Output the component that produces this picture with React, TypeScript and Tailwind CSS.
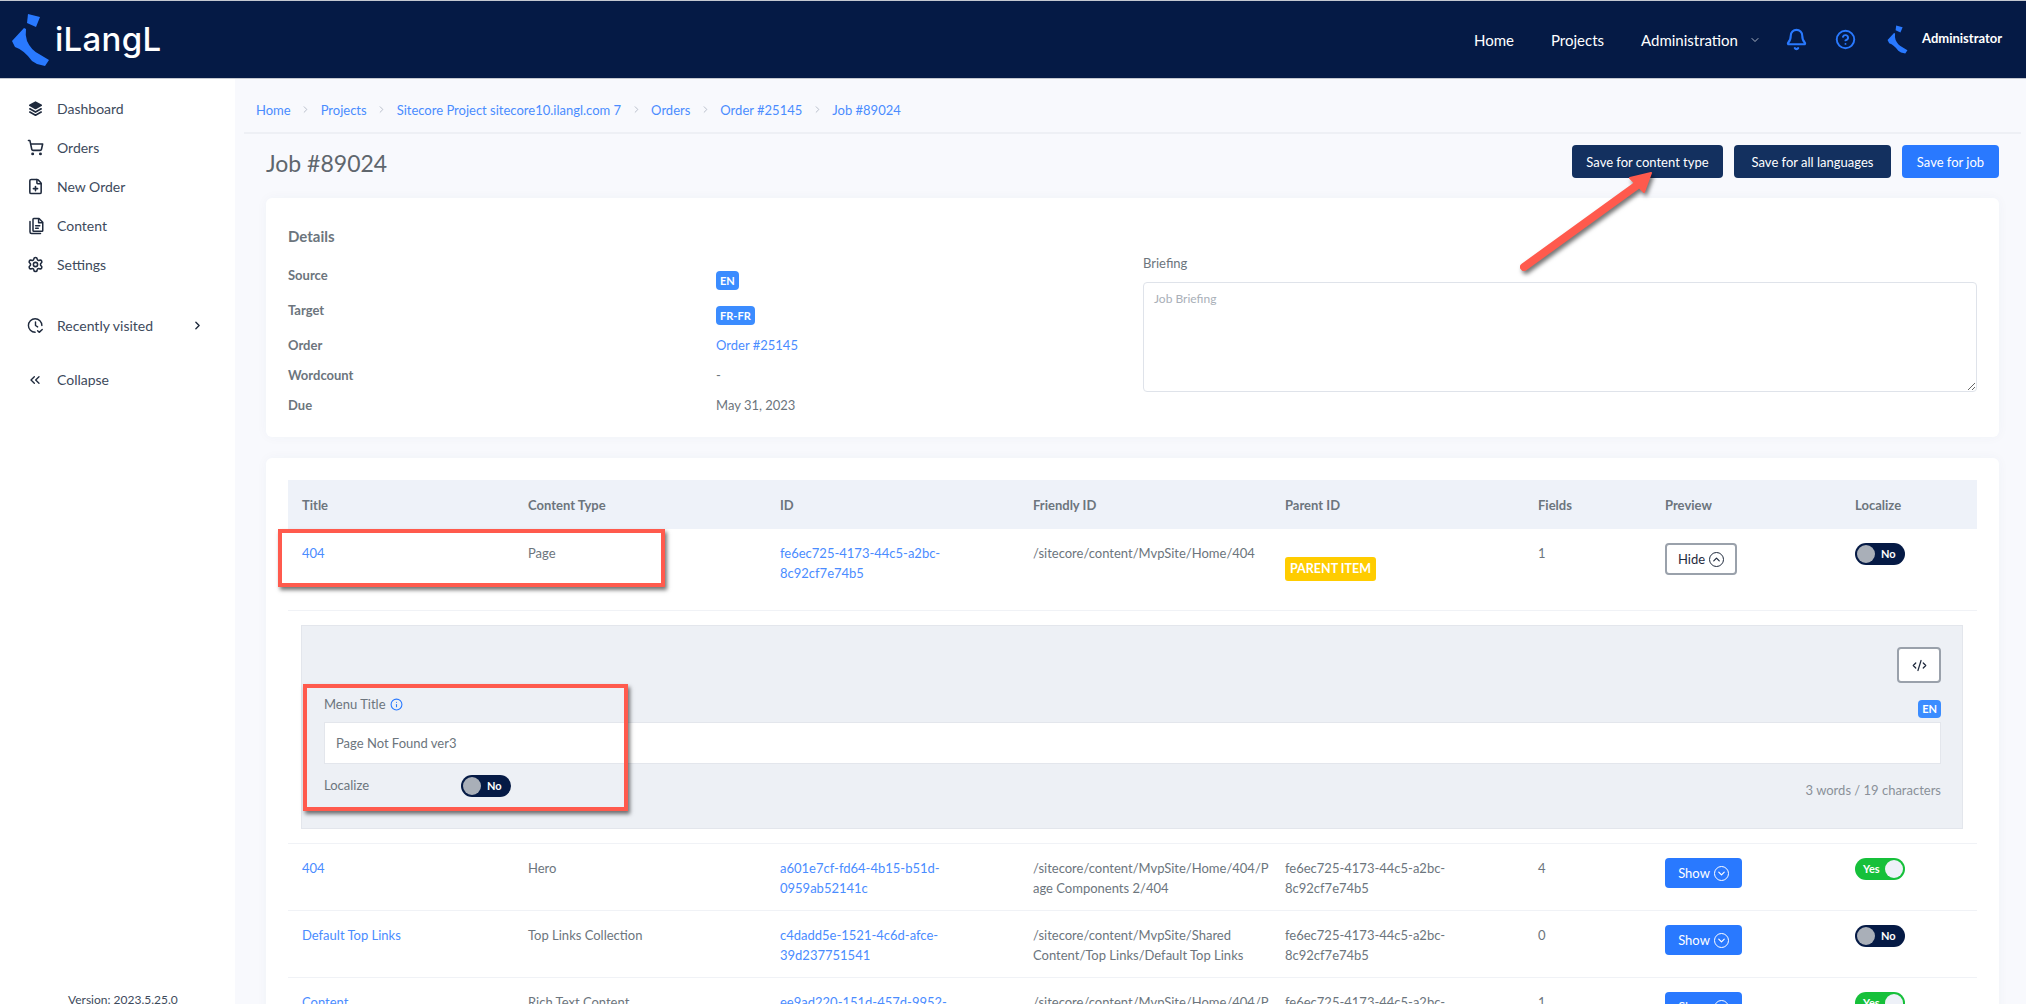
import React from 'react';
import {
  Bell,
  ChevronDown,
  ChevronRight,
  ChevronsLeft,
  ChevronUp,
  CircleHelp,
  CodeXml,
  FilePlus,
  Info,
  Settings,
  ShoppingCart,
} from 'lucide-react';

const Mark: React.FC<{ className: string }> = ({ className }) => (
  <svg viewBox="11 13 39 54" className={className} fill="#2979ff">
    <path d="M28 14 L40 17 L36 27 L27 23 Z" />
    <path d="M24 28 L12 41 L15 47 Q24 50 32 61 L37 64 L45 66 L49 60 L39 54 Q31 50 27 41 Q25 35 26 29 Z" />
  </svg>
);

const LayersIcon: React.FC = () => (
  <svg viewBox="0 0 24 24" className="h-[17px] w-[17px] text-[#1f2a3d]" fill="currentColor" stroke="currentColor" strokeWidth="2.4" strokeLinecap="round" strokeLinejoin="round">
    <path d="M12 3 L20 7.5 L12 12 L4 7.5 Z" />
    <path d="M4 12.5 L12 17 L20 12.5" fill="none" />
    <path d="M4 17 L12 21.5 L20 17" fill="none" />
  </svg>
);

const ContentIcon: React.FC = () => (
  <svg viewBox="0 0 24 24" className="h-[18px] w-[18px] text-[#1f2a3d]" fill="none" stroke="currentColor" strokeWidth="2" strokeLinecap="round" strokeLinejoin="round">
    <path d="M9 2 H16 L21 7 V18 A1 1 0 0 1 20 19 H9 A1 1 0 0 1 8 18 V3 A1 1 0 0 1 9 2 Z" />
    <path d="M15.5 2.5 V7.5 H20.5" />
    <path d="M11.5 11.5 H17 M11.5 15 H15" />
    <path d="M4 6 V20 A2 2 0 0 0 6 22 H18" />
  </svg>
);

const RecentIcon: React.FC = () => (
  <svg viewBox="0 0 24 24" className="h-[17px] w-[17px] text-[#1f2a3d]" fill="none" stroke="currentColor" strokeWidth="2" strokeLinecap="round" strokeLinejoin="round">
    <path d="M21 12 A9.5 9.5 0 1 0 11.5 21.5" />
    <path d="M12 7 V12 L15 14" />
    <path d="M15 19.5 L17.2 21.7 L21.5 17.5" />
  </svg>
);

const Toggle: React.FC<{ on: boolean }> = ({ on }) =>
  on ? (
    <div className="flex h-[22px] w-[50px] items-center justify-between rounded-full bg-[#16c03a] pl-[8px] pr-[2px]">
      <span className="text-[11px] font-bold text-white">Yes</span>
      <span className="h-[18px] w-[18px] rounded-full bg-[#eef1f8]" />
    </div>
  ) : (
    <div className="flex h-[22px] w-[50px] items-center gap-[6px] rounded-full bg-[#051a45] pl-[2px]">
      <span className="h-[18px] w-[18px] rounded-full bg-[#a9afb8]" />
      <span className="text-[11px] font-bold text-white">No</span>
    </div>
  );

const navItems = [
  { label: 'Dashboard', icon: <LayersIcon /> },
  { label: 'Orders', icon: <ShoppingCart className="h-[17px] w-[17px] text-[#1f2a3d]" strokeWidth={2.2} /> },
  { label: 'New Order', icon: <FilePlus className="h-[17px] w-[17px] text-[#1f2a3d]" strokeWidth={2.2} /> },
  { label: 'Content', icon: <ContentIcon /> },
  { label: 'Settings', icon: <Settings className="h-[17px] w-[17px] text-[#1f2a3d]" strokeWidth={2.2} /> },
];

const crumbs = ['Home', 'Projects', 'Sitecore Project sitecore10.ilangl.com 7', 'Orders', 'Order #25145', 'Job #89024'];

const parentId = 'fe6ec725-4173-44c5-a2bc-8c92cf7e74b5';

const rows = [
  { title: '404', type: 'Hero', id: 'a601e7cf-fd64-4b15-b51d-0959ab52141c', friendly: ['/sitecore/content/MvpSite/Home/404/P', 'age Components 2/404'], fields: 4, on: true },
  { title: 'Default Top Links', type: 'Top Links Collection', id: 'c4dadd5e-1521-4c6d-afce-39d237751541', friendly: ['/sitecore/content/MvpSite/Shared', 'Content/Top Links/Default Top Links'], fields: 0, on: false },
  { title: 'Content', type: 'Rich Text Content', id: 'ee9ad220-151d-457d-9952-', friendly: ['/sitecore/content/MvpSite/Home/404/P'], fields: 1, on: true },
];

const gridCols = 'grid grid-cols-[226px_252px_253px_252px_253px_127px_190px_1fr] pl-[14px]';

const App: React.FC = () => {
  return (
    <div className="relative flex h-screen flex-col overflow-hidden bg-[#f8f9fd] font-['Lato',sans-serif] text-[13px] leading-5 text-[#6c757d]">
      {/* top bar */}
      <header className="flex h-[79px] shrink-0 items-center border-y border-[#c4c8d0] bg-[#051a45] text-white">
        <Mark className="ml-[11px] h-[54px] w-[39px]" />
        <span className="ml-[5px] font-['Inter',sans-serif] text-[33px] font-medium leading-none tracking-[0.3px]">iLangL</span>
        <nav className="ml-auto flex items-center text-[15px]">
          <span>Home</span>
          <span className="ml-[37px]">Projects</span>
          <span className="ml-[37px]">Administration</span>
          <ChevronDown className="ml-[11px] h-[12px] w-[12px] text-[#aab2c2]" />
          <Bell className="ml-[24px] h-[23px] w-[23px] text-[#2979ff]" strokeWidth={2.2} />
          <CircleHelp className="ml-[27px] h-[21px] w-[21px] text-[#2979ff]" strokeWidth={2.2} />
          <Mark className="ml-[31px] h-[29px] w-[21px]" />
          <span className="mb-[4px] ml-[14px] mr-[24px] text-[13px] font-bold">Administrator</span>
        </nav>
      </header>

      <div className="flex min-h-0 flex-1">
        {/* sidebar */}
        <aside className="flex w-[235px] shrink-0 flex-col bg-white pl-[27px] pt-[10px] text-[14px] text-[#3d4a5c]">
          {navItems.map(({ label, icon }) => (
            <div key={label} className="flex h-[39px] items-center">
              <span className="flex w-[30px] shrink-0">{icon}</span>
              <span>{label}</span>
            </div>
          ))}
          <div className="mt-[22px] flex h-[39px] items-center">
            <span className="flex w-[30px] shrink-0"><RecentIcon /></span>
            <span>Recently visited</span>
            <ChevronRight className="ml-[38px] h-[13px] w-[13px] text-[#1f2a3d]" strokeWidth={2.6} />
          </div>
          <div className="mt-[15px] flex h-[39px] items-center">
            <span className="flex w-[30px] shrink-0"><ChevronsLeft className="h-[16px] w-[16px] text-[#1f2a3d]" /></span>
            <span>Collapse</span>
          </div>
          <div className="mb-[-6px] ml-[41px] mt-auto text-[12px]">Version: 2023.5.25.0</div>
        </aside>

        {/* main */}
        <main className="min-w-0 flex-1 pl-[9px] pr-[5px]">
          <div className="flex h-[55px] items-center gap-[9.5px] border-b-2 border-[#eef0f5] pl-[12px] pt-[8px] text-[#4a8cff]">
            {crumbs.map((c, i) => (
              <React.Fragment key={c}>
                {i > 0 && <ChevronRight className="h-[11px] w-[11px] text-[#b4bac6]" />}
                <span>{c}</span>
              </React.Fragment>
            ))}
          </div>

          <div className="pl-[22px] pr-[22px]">
            <div className="flex items-start justify-between pt-[11px]">
              <h1 className="pt-[3px] text-[23px] font-normal leading-[30px] text-[#5f666d]">Job #89024</h1>
              <div className="flex gap-[11px] text-white">
                <button className="h-[33px] w-[151px] rounded-sm bg-[#13305f]">Save for content type</button>
                <button className="h-[33px] w-[157px] rounded-sm bg-[#13305f]">Save for all languages</button>
                <button className="h-[33px] w-[97px] rounded-sm bg-[#2979ff]">Save for job</button>
              </div>
            </div>

            {/* details card */}
            <section className="mt-[20px] flex h-[239px] rounded-md bg-white pl-[22px] pt-[28px] shadow-[0_0_12px_rgba(60,70,100,0.04)]">
              <div className="w-[855px]">
                <h2 className="text-[15px] font-bold text-[#6c757d]">Details</h2>
                <div className="mt-[19px] grid grid-cols-[428px_1fr] grid-rows-[35px_35px_30px_30px_30px]">
                  <div className="font-bold">Source</div>
                  <div>
                    <span className="mt-[6px] inline-block rounded-sm bg-[#3b8cff] px-[4px] text-[11px] font-bold leading-[19px] text-white">EN</span>
                  </div>
                  <div className="font-bold">Target</div>
                  <div>
                    <span className="mt-[6px] inline-block rounded-sm bg-[#3b8cff] px-[4px] text-[11px] font-bold leading-[19px] text-white">FR-FR</span>
                  </div>
                  <div className="font-bold">Order</div>
                  <div className="text-[#4a8cff]">Order #25145</div>
                  <div className="font-bold">Wordcount</div>
                  <div>-</div>
                  <div className="font-bold">Due</div>
                  <div>May 31, 2023</div>
                </div>
              </div>
              <div className="mt-[27px] w-[834px]">
                <div>Briefing</div>
                <textarea
                  readOnly
                  placeholder="Job Briefing"
                  className="mt-[9px] block h-[110px] w-full rounded-sm border border-[#dfe3ea] px-[10px] py-[6px] text-[12px] placeholder:text-[#a9afb8]"
                />
              </div>
            </section>

            {/* items table */}
            <section className="mt-[21px] rounded-md bg-white px-[22px] pb-[22px] pt-[22px] shadow-[0_0_12px_rgba(60,70,100,0.04)]">
              <div className={`${gridCols} h-[49px] items-center bg-[#eef2f9] font-bold`}>
                <div>Title</div>
                <div>Content Type</div>
                <div>ID</div>
                <div>Friendly ID</div>
                <div>Parent ID</div>
                <div>Fields</div>
                <div>Preview</div>
                <div>Localize</div>
              </div>

              {/* expanded row */}
              <div className={`${gridCols} h-[82px] border-b border-[#f0f2f6] pt-[14px]`}>
                <div className="text-[#4a8cff]">404</div>
                <div>Page</div>
                <div className="w-[200px] text-[#4a8cff]">fe6ec725-4173-44c5-a2bc-8c92cf7e74b5</div>
                <div className="whitespace-nowrap">/sitecore/content/MvpSite/Home/404</div>
                <div>
                  <span className="mt-[14px] inline-block rounded-[3px] bg-[#ffcc00] px-[5px] text-[12.5px] font-bold leading-[24px] text-white">PARENT ITEM</span>
                </div>
                <div>1</div>
                <div>
                  <button className="flex h-[32px] w-[72px] items-center justify-center gap-[4px] rounded-sm border-2 border-[#9aa1ab] text-[#1f2a3d]">
                    Hide
                    <span className="flex h-[15px] w-[15px] items-center justify-center rounded-full border-[1.5px] border-[#1f2a3d]">
                      <ChevronUp className="h-[11px] w-[11px]" strokeWidth={2.6} />
                    </span>
                  </button>
                </div>
                <Toggle on={false} />
              </div>

              <div className="border-b border-[#f0f2f6] py-[14px] pl-[13px] pr-[14px]">
                <div className="h-[204px] border border-[#e3e6ec] bg-[#edf0f5] pl-[22px] pr-[21px] pt-[21px]">
                  <div className="flex justify-end">
                    <button className="flex h-[36px] w-[44px] items-center justify-center rounded-sm border-2 border-[#9aa1ab] bg-white text-[#1f2a3d]">
                      <CodeXml className="h-[15px] w-[15px]" />
                    </button>
                  </div>
                  <div className="mt-[11px] flex h-[24px] justify-between">
                    <div className="flex h-[20px] items-center gap-[4px]">
                      Menu Title <Info className="h-[13px] w-[13px] text-[#2979ff]" />
                    </div>
                    <span className="h-[18px] self-end rounded-sm bg-[#3b8cff] px-[4px] text-[11px] font-bold leading-[18px] text-white">EN</span>
                  </div>
                  <div className="mt-[4px] flex h-[42px] items-center border border-[#e3e6ec] bg-white pl-[11px]">Page Not Found ver3</div>
                  <div className="mt-[11px] flex items-start">
                    <div className="w-[137px]">Localize</div>
                    <Toggle on={false} />
                    <div className="ml-auto mt-[5px] text-[#8a9099]">3 words / 19 characters</div>
                  </div>
                </div>
              </div>

              {rows.map((r) => (
                <div key={r.id} className={`${gridCols} h-[67px] border-b border-[#f0f2f6] pt-[14px]`}>
                  <div className="text-[#4a8cff]">{r.title}</div>
                  <div>{r.type}</div>
                  <div className="w-[200px] text-[#4a8cff]">{r.id}</div>
                  <div className="whitespace-nowrap">
                    {r.friendly.map((line) => (
                      <div key={line}>{line}</div>
                    ))}
                  </div>
                  <div className="w-[200px]">{parentId}</div>
                  <div>{r.fields}</div>
                  <div>
                    <button className="flex h-[30px] w-[77px] items-center justify-center gap-[4px] rounded-sm bg-[#2979ff] text-white">
                      Show
                      <span className="flex h-[15px] w-[15px] items-center justify-center rounded-full border-[1.5px] border-white">
                        <ChevronDown className="h-[11px] w-[11px]" strokeWidth={2.6} />
                      </span>
                    </button>
                  </div>
                  <Toggle on={r.on} />
                </div>
              ))}
            </section>
          </div>
        </main>
      </div>

      {/* red annotations drawn over the screenshot */}
      <div className="absolute left-[278px] top-[529px] h-[58px] w-[387px] border-4 border-[#ff5a4d] shadow-[2px_3px_4px_rgba(0,0,0,0.55)]" />
      <div className="absolute left-[303px] top-[684px] h-[127px] w-[325px] border-4 border-[#ff5a4d] shadow-[2px_3px_4px_rgba(0,0,0,0.55)]" />
      <svg className="absolute left-[1500px] top-[160px] h-[120px] w-[170px] drop-shadow-[2px_3px_2px_rgba(0,0,0,0.55)]" viewBox="1500 160 170 120">
        <path d="M1524 267 L1636 186" stroke="#ff5a4d" strokeWidth="8" strokeLinecap="round" />
        <path d="M1651 173 L1630 178 L1644 192 Z" fill="#ff5a4d" stroke="#ff5a4d" strokeWidth="2" strokeLinejoin="round" />
      </svg>
    </div>
  );
};

export default App;
